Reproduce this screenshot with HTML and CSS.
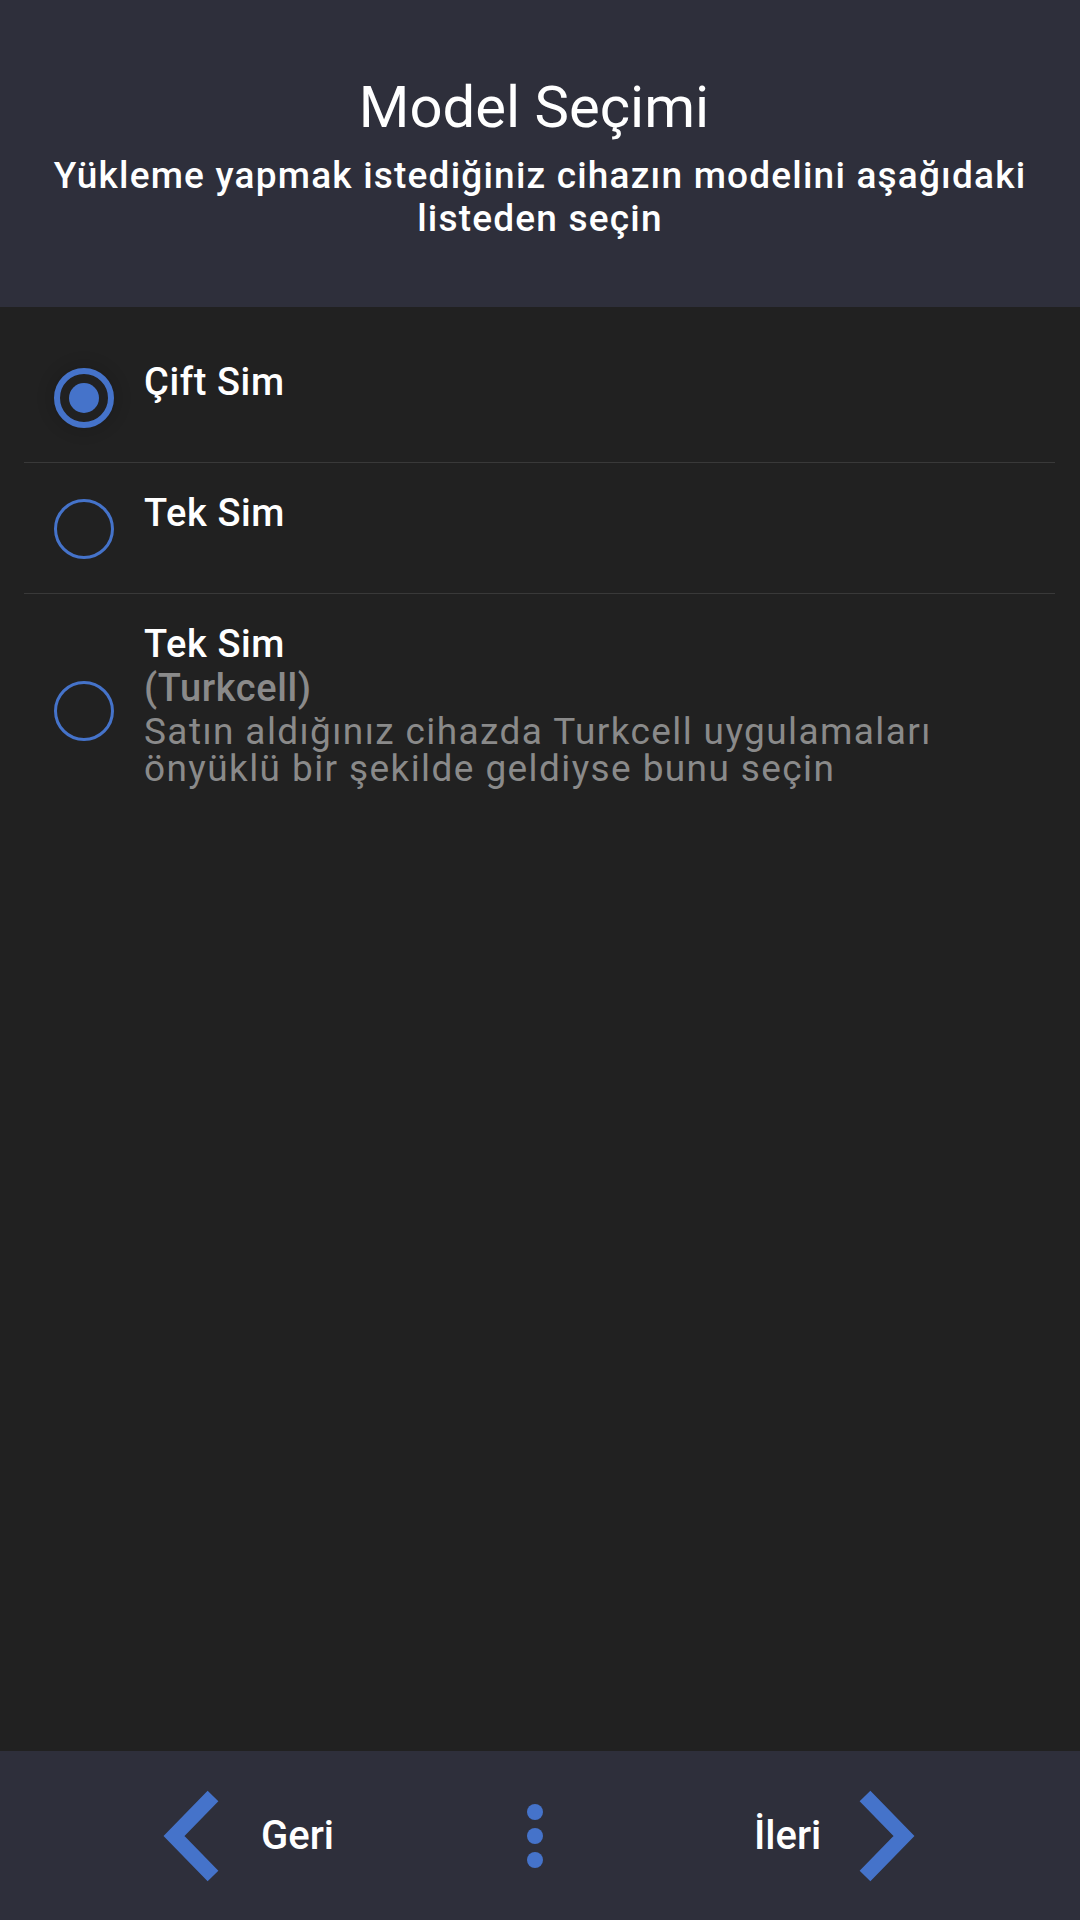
FILE: index.html
```html
<!DOCTYPE html>
<html lang="tr">
<head>
    <meta charset="UTF-8">
    <meta name="viewport" content="width=device-width, initial-scale=1.0">
    <title>Model Seçimi</title>
    <link rel="stylesheet" href="styles.css">
</head>

<body>
    <div class="page">
        <!-- Header -->
        <div class="header">
            <h1>Model Seçimi</h1>
            <p class="subtitle">Yükleme yapmak istediğiniz cihazın modelini aşağıdaki listeden seçin</p>
        </div>

        <!-- Model list -->
        <div class="model-list">
            <label class="model-item">
                <span class="radio-wrap"><span class="radio checked"></span></span>
                <span class="model-text">
                    <span class="model-name">Çift Sim</span>
                </span>
            </label>

            <label class="model-item">
                <span class="radio-wrap"><span class="radio"></span></span>
                <span class="model-text">
                    <span class="model-name">Tek Sim</span>
                </span>
            </label>

            <label class="model-item last">
                <span class="radio-wrap"><span class="radio"></span></span>
                <span class="model-text">
                    <span class="model-name">Tek Sim</span>
                    <span class="model-tag">(Turkcell)</span>
                    <span class="model-desc">Satın aldığınız cihazda Turkcell uygulamaları önyüklü bir şekilde geldiyse bunu seçin</span>
                </span>
            </label>
        </div>

        <!-- Bottom navigation -->
        <div class="footer">
            <div class="nav-btn back">
                <svg class="chevron" width="56" height="92" viewBox="0 0 56 92">
                    <polyline points="50,6 11,46 50,86" fill="none" stroke="#4573ca" stroke-width="15" stroke-linejoin="miter"/>
                </svg>
                <span>Geri</span>
            </div>

            <div class="dots">
                <span></span>
                <span></span>
                <span></span>
            </div>

            <div class="nav-btn next">
                <span>İleri</span>
                <svg class="chevron" width="56" height="92" viewBox="0 0 56 92">
                    <polyline points="6,6 45,46 6,86" fill="none" stroke="#4573ca" stroke-width="15" stroke-linejoin="miter"/>
                </svg>
            </div>
        </div>
    </div>
</body>

</html>
```

FILE: styles.css
```css
/* General Styles */
body {
    margin: 0;
    padding: 0;
    font-family: Roboto, "Noto Sans", Arial, sans-serif;
    background-color: #212121;
    color: white;
}

.page {
    width: 1080px;
    height: 1920px;
    display: flex;
    flex-direction: column;
}

/* Header */
.header {
    height: 307px;
    box-sizing: border-box;
    padding-top: 72px;
    background-color: #2e2f3b;
    text-align: center;
}

h1 {
    margin: 0;
    padding-right: 12px;
    font-size: 58px;
    font-weight: 400;
    line-height: 70px;
}

.subtitle {
    margin: 12px 30px 0;
    font-size: 37px;
    font-weight: 500;
    letter-spacing: 1.2px;
    line-height: 43px;
}

/* Model list */
.model-list {
    flex: 1;
    padding: 25px 25px 0 24px;
}

.model-item {
    display: flex;
    padding: 28px 0 26px;
    border-bottom: 1px solid #393939;
    cursor: pointer;
}

.model-item.last {
    border-bottom: none;
}

.radio-wrap {
    width: 60px;
    min-height: 76px;
    margin: 0 30px;
    display: flex;
    align-items: center;
    align-self: center;
}

.radio {
    width: 60px;
    height: 60px;
    box-sizing: border-box;
    border: 3px solid #4573ca;
    border-radius: 50%;
    display: flex;
    align-items: center;
    justify-content: center;
}

.radio.checked {
    border-width: 6px;
    box-shadow: 0 0 12px 8px rgba(0, 0, 0, 0.08);
}

.radio.checked::after {
    content: "";
    width: 30px;
    height: 30px;
    border-radius: 50%;
    background-color: #4573ca;
}

.model-text {
    display: flex;
    flex-direction: column;
    align-self: flex-start;
}

.last .model-text {
    padding-bottom: 12px;
}

.model-name,
.model-tag {
    font-size: 38px;
    font-weight: 500;
    letter-spacing: 0.6px;
    line-height: 44px;
}

.model-tag {
    color: #8a8a8a;
}

.model-desc {
    margin-top: 3px;
    width: 820px;
    font-size: 37px;
    letter-spacing: 1.4px;
    line-height: 37px;
    color: #8a8a8a;
}

/* Bottom navigation */
.footer {
    height: 169px;
    background-color: #2e2f3b;
    display: flex;
    align-items: center;
    padding-left: 163px;
}

.nav-btn {
    display: flex;
    align-items: center;
    font-size: 40px;
    font-weight: 500;
    cursor: pointer;
}

.nav-btn.back .chevron {
    margin-right: 42px;
}

.nav-btn.next {
    margin-left: 211px;
}

.nav-btn.next .chevron {
    margin-left: 38px;
}

.dots {
    margin-left: 193px;
    display: flex;
    flex-direction: column;
    gap: 8px;
}

.dots span {
    width: 16px;
    height: 16px;
    border-radius: 50%;
    background-color: #4573ca;
}
```
